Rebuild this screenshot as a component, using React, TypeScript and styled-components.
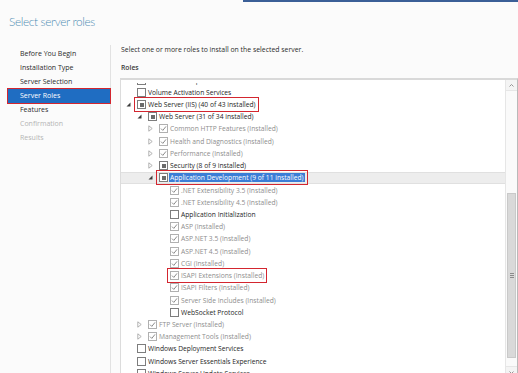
import styled, { createGlobalStyle, css } from 'styled-components'

const GlobalStyle = createGlobalStyle`
  html, body { margin: 0; padding: 0; background: #fbfbfb; }
  body { font-family: "Open Sans", "Noto Sans", sans-serif; color: #1e1e1e; }
  #root { width: 518px; height: 373px; }
`

const Window = styled.div`
  width: 518px;
  height: 373px;
  overflow: hidden;
  background: #fbfbfb;
  display: flex;
  flex-direction: column;
`

const AccentBar = styled.div`
  flex: none;
  height: 2px;
  margin-left: 243px;
  background: #3b5f97;
`

const Title = styled.h1`
  flex: none;
  margin: 0 0 12px;
  padding: 9px 0 0 9px;
  line-height: 22px;
  font-family: Lato, "Open Sans", sans-serif;
  font-size: 11.8px;
  letter-spacing: -0.35px;
  font-weight: 300;
  color: #4f8db3;
`

const Body = styled.div`
  flex: 1;
  min-height: 0;
  display: grid;
  grid-template-columns: 111px 1fr;
`

const Nav = styled.nav`
  border-right: 1px solid #e2e2e2;
  padding: 2px 0 0 8px;
`

type Step = 'done' | 'active' | 'disabled'

const NavItem = styled.div<{ $state: Step }>`
  height: 14px;
  line-height: 14px;
  padding-left: 12px;
  font-size: 7px;
  color: #2b2b2b;
  ${p => p.$state === 'active' && css`
    background: #1f6dc2;
    color: #fff;
    outline: 1.5px solid #d3262f;
  `}
  ${p => p.$state === 'disabled' && css`
    color: #b4b4b4;
  `}
`

const Content = styled.div`
  padding-left: 10px;
  display: flex;
  flex-direction: column;
`

const Intro = styled.p`
  margin: 0;
  line-height: 10px;
  font-size: 6.9px;
  color: #2b2b2b;
`

const Label = styled.div`
  margin-top: 8px;
  line-height: 10px;
  font-size: 6.8px;
  font-weight: 600;
  color: #3a3a3a;
`

const ListBox = styled.div`
  margin: 5px 0 0 -1px;
  width: 396px;
  height: 297px;
  flex: none;
  display: flex;
  background: #fff;
  border: 1px solid #dcdcdc;
  border-top: 2px solid #d9d9d9;
  border-right-color: #b9b9b9;
`

const TreeViewport = styled.div`
  flex: 1;
  overflow: hidden;
  border-top: 3px solid #fff;
`

const TreeContent = styled.div<{ $scroll: number }>`
  margin-top: ${p => -p.$scroll}px;
`

const Row = styled.div<{ $level: number; $selected?: boolean }>`
  height: 12.23px;
  display: flex;
  align-items: center;
  padding-left: ${p => 4 + p.$level * 11}px;
  box-sizing: border-box;
  ${p => p.$selected && css`
    background: #ededed;
    border-top: 1px solid #e0e0e0;
    border-bottom: 1px solid #e0e0e0;
  `}
`

const Expander = styled.span`
  flex: none;
  width: 12px;
  height: 8px;
  display: flex;
  align-items: center;
  padding-left: 1px;
  box-sizing: border-box;
`

const Item = styled.span<{ $marked?: boolean }>`
  display: flex;
  align-items: center;
  gap: 2px;
  ${p => p.$marked && css`
    outline: 1.5px solid #d3262f;
    outline-offset: 2px;
  `}
`

type Check = 'off' | 'on' | 'partial'

const Box = styled.span<{ $check: Check; $muted: boolean }>`
  flex: none;
  width: 9px;
  height: 9px;
  box-sizing: border-box;
  border: 1px solid ${p => (p.$muted ? '#b0b0b0' : '#7d7d7d')};
  background: #fff;
  display: flex;
  align-items: center;
  justify-content: center;
  ${p => p.$check === 'partial' && css`
    &::after {
      content: '';
      width: 4px;
      height: 4px;
      background: #6b6b6b;
    }
  `}
`

const Text = styled.span<{ $muted: boolean; $selected?: boolean }>`
  font-size: 6.7px;
  line-height: 9px;
  white-space: nowrap;
  color: ${p => (p.$muted ? '#8e8e8e' : '#1e1e1e')};
  ${p => p.$selected && css`
    background: #3b7dd6;
    color: #fff;
    padding: 0 1px;
    margin-left: -1px;
  `}
`

const ScrollBar = styled.div`
  flex: none;
  width: 11px;
  display: flex;
  flex-direction: column;
  border-left: 1px solid #e6e6e6;
  background: #fafafa;
`

const ScrollButton = styled.div`
  flex: none;
  height: 11px;
  display: flex;
  align-items: center;
  justify-content: center;
  background: #f4f4f4;
  border-bottom: 1px solid #e6e6e6;
  box-sizing: border-box;
  &:last-child {
    border-bottom: none;
    border-top: 1px solid #e6e6e6;
  }
`

const Track = styled.div`
  flex: 1;
  display: flex;
  flex-direction: column;
  align-items: stretch;
`

const Thumb = styled.div<{ $offset: number; $size: number }>`
  margin: ${p => p.$offset}px 1px 0;
  height: ${p => p.$size}px;
  background: #d9d9d9;
  border: 1px solid #c9c9c9;
  box-sizing: border-box;
  display: flex;
  flex-direction: column;
  align-items: center;
  justify-content: center;
  gap: 1px;
  & > i {
    width: 4px;
    height: 1px;
    background: #8a8a8a;
  }
`

type Node = {
  label: string
  level: number
  check: Check
  installed?: boolean
  expander?: 'open' | 'closed'
  marked?: boolean
  selected?: boolean
}

const nodes: Node[] = [
  { label: 'Remote Desktop Services', level: 0, check: 'off' },
  { label: 'Volume Activation Services', level: 0, check: 'off' },
  { label: 'Web Server (IIS) (40 of 43 installed)', level: 0, check: 'partial', expander: 'open', marked: true },
  { label: 'Web Server (31 of 34 installed)', level: 1, check: 'partial', expander: 'open' },
  { label: 'Common HTTP Features (Installed)', level: 2, check: 'on', installed: true, expander: 'closed' },
  { label: 'Health and Diagnostics (Installed)', level: 2, check: 'on', installed: true, expander: 'closed' },
  { label: 'Performance (Installed)', level: 2, check: 'on', installed: true, expander: 'closed' },
  { label: 'Security (8 of 9 installed)', level: 2, check: 'partial', expander: 'closed' },
  { label: 'Application Development (9 of 11 installed)', level: 2, check: 'partial', expander: 'open', marked: true, selected: true },
  { label: '.NET Extensibility 3.5 (Installed)', level: 3, check: 'on', installed: true },
  { label: '.NET Extensibility 4.5 (Installed)', level: 3, check: 'on', installed: true },
  { label: 'Application Initialization', level: 3, check: 'off' },
  { label: 'ASP (Installed)', level: 3, check: 'on', installed: true },
  { label: 'ASP.NET 3.5 (Installed)', level: 3, check: 'on', installed: true },
  { label: 'ASP.NET 4.5 (Installed)', level: 3, check: 'on', installed: true },
  { label: 'CGI (Installed)', level: 3, check: 'on', installed: true },
  { label: 'ISAPI Extensions (Installed)', level: 3, check: 'on', installed: true, marked: true },
  { label: 'ISAPI Filters (Installed)', level: 3, check: 'on', installed: true },
  { label: 'Server Side Includes (Installed)', level: 3, check: 'on', installed: true },
  { label: 'WebSocket Protocol', level: 3, check: 'off' },
  { label: 'FTP Server (Installed)', level: 1, check: 'on', installed: true, expander: 'closed' },
  { label: 'Management Tools (Installed)', level: 1, check: 'on', installed: true, expander: 'closed' },
  { label: 'Windows Deployment Services', level: 0, check: 'off' },
  { label: 'Windows Server Essentials Experience', level: 0, check: 'off' },
  { label: 'Windows Server Update Services', level: 0, check: 'off' },
]

const steps: { label: string; state: Step }[] = [
  { label: 'Before You Begin', state: 'done' },
  { label: 'Installation Type', state: 'done' },
  { label: 'Server Selection', state: 'done' },
  { label: 'Server Roles', state: 'active' },
  { label: 'Features', state: 'done' },
  { label: 'Confirmation', state: 'disabled' },
  { label: 'Results', state: 'disabled' },
]

const ExpandIcon = ({ open }: { open: boolean }) =>
  open ? (
    <svg width="5" height="5" viewBox="0 0 5 5">
      <path d="M4.5 0.5 L4.5 4.5 L0.5 4.5 Z" fill="#3c3c3c" />
    </svg>
  ) : (
    <svg width="5" height="7" viewBox="0 0 5 7">
      <path d="M0.8 0.8 L4.2 3.5 L0.8 6.2 Z" fill="none" stroke="#a0a0a0" strokeWidth="0.8" />
    </svg>
  )

const CheckMark = ({ muted }: { muted: boolean }) => (
  <svg width="7" height="7" viewBox="0 0 7 7">
    <path d="M1 3.6 L2.8 5.4 L6 1.4" fill="none" stroke={muted ? '#8c8c8c' : '#333'} strokeWidth="1" />
  </svg>
)

const Chevron = ({ down }: { down?: boolean }) => (
  <svg width="5" height="3" viewBox="0 0 5 3">
    <path d={down ? 'M0.5 0.5 L2.5 2.5 L4.5 0.5' : 'M0.5 2.5 L2.5 0.5 L4.5 2.5'} fill="none" stroke="#8a8a8a" strokeWidth="0.9" />
  </svg>
)

const App = () => {
  return (
    <>
      <GlobalStyle />
      <Window>
        <AccentBar />
        <Title>Select server roles</Title>
        <Body>
          <Nav>
            {steps.map(s => (
              <NavItem key={s.label} $state={s.state}>{s.label}</NavItem>
            ))}
          </Nav>
          <Content>
            <Intro>Select one or more roles to install on the selected server.</Intro>
            <Label>Roles</Label>
            <ListBox>
              <TreeViewport>
                <TreeContent $scroll={9}>
                  {nodes.map(n => {
                    const muted = !!n.installed
                    return (
                      <Row key={n.label} $level={n.level} $selected={n.selected}>
                        <Expander>{n.expander && <ExpandIcon open={n.expander === 'open'} />}</Expander>
                        <Item $marked={n.marked}>
                          <Box $check={n.check} $muted={muted}>
                            {n.check === 'on' && <CheckMark muted={muted} />}
                          </Box>
                          <Text $muted={muted} $selected={n.selected}>{n.label}</Text>
                        </Item>
                      </Row>
                    )
                  })}
                </TreeContent>
              </TreeViewport>
              <ScrollBar>
                <ScrollButton><Chevron /></ScrollButton>
                <Track>
                  <Thumb $offset={102} $size={165}>
                    <i /><i /><i />
                  </Thumb>
                </Track>
                <ScrollButton><Chevron down /></ScrollButton>
              </ScrollBar>
            </ListBox>
          </Content>
        </Body>
      </Window>
    </>
  )
}

export default App
